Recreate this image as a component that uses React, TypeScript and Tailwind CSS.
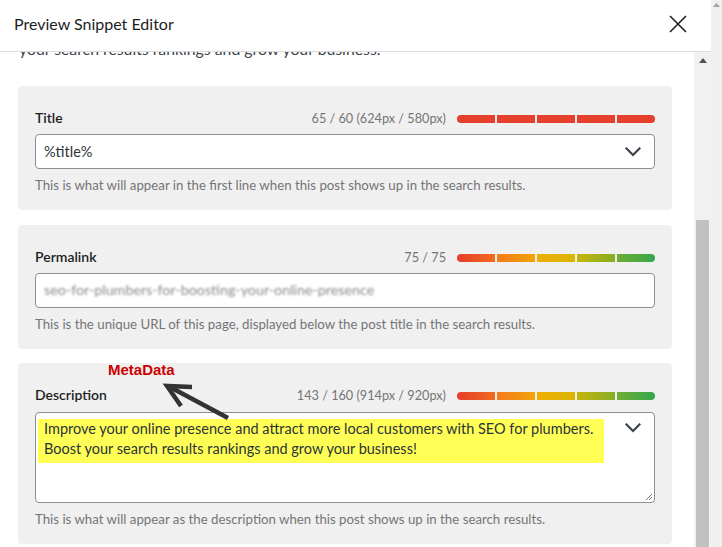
import React from "react";

const RED = ["bg-[#e5402b]", "bg-[#e5402b]", "bg-[#e5402b]", "bg-[#e5402b]", "bg-[#e5402b]"];
const GRAD = [
  "bg-[linear-gradient(90deg,#e53d2a,#f26a1e)]",
  "bg-[linear-gradient(90deg,#f4791a,#f2a30b)]",
  "bg-[linear-gradient(90deg,#eeae06,#dab500)]",
  "bg-[linear-gradient(90deg,#c6b50b,#86ad26)]",
  "bg-[linear-gradient(90deg,#6fae33,#35a64b)]",
];

function Bar({ segs }: { segs: string[] }) {
  return (
    <div className="mt-[2px] flex w-[198px] gap-[2px]">
      {segs.map((c, i) => (
        <div
          key={i}
          className={[
            "h-[8px] flex-1",
            c,
            i === 0 ? "rounded-l-[4px]" : "",
            i === segs.length - 1 ? "rounded-r-[4px]" : "",
          ].join(" ")}
        />
      ))}
    </div>
  );
}

function Chevron() {
  return (
    <svg width="16" height="10" viewBox="0 0 16 10" fill="none">
      <path d="M1.5 1.5 L8 8 L14.5 1.5" stroke="#3c434a" strokeWidth="2.2" strokeLinecap="square" />
    </svg>
  );
}

function Header({ label, counter, segs }: { label: string; counter: string; segs: string[] }) {
  return (
    <div className="flex h-[20px] items-center justify-between">
      <span className="mt-[-1px] text-[14px] font-semibold text-[#1e1e1e]">{label}</span>
      <div className="flex items-center gap-[11px]">
        <span className="mt-[2px] text-[12.7px] text-[#757575]">{counter}</span>
        <Bar segs={segs} />
      </div>
    </div>
  );
}

function Help({ children }: { children: React.ReactNode }) {
  return <div className="mt-[6px] text-[13.25px] leading-[20px] text-[#757575]">{children}</div>;
}

export default function App() {
  return (
    <div className="flex h-[547px] w-[722px] overflow-hidden bg-[#f0f0f0] font-['Lato','Segoe_UI',sans-serif]">
      <div className="flex w-[711px] flex-col bg-white">
        <div className="flex h-[52px] shrink-0 items-center justify-between border-b border-[#dcdcde] pl-[14px] pr-[24px]">
          <span className="mt-[-4px] text-[16px] text-[#1e1e1e]">Preview Snippet Editor</span>
          <svg width="18" height="18" viewBox="0 0 18 18" className="mt-[-4px]">
            <path d="M1 1 L17 17 M17 1 L1 17" stroke="#1e1e1e" strokeWidth="1.6" />
          </svg>
        </div>
        <div className="flex min-h-0 flex-1">
          <div className="relative flex-1 overflow-hidden pl-[18px] pr-[22px]">
            <div className="mt-[-13px] pl-[1px] text-[15.8px] leading-[20px] text-[#3c434a]">
              your search results rankings and grow your business.
            </div>
            <div className="mt-[27px] flex flex-col gap-[14.5px]">
              <div className="rounded-[4px] bg-[#f0f0f1] px-[17px] pt-[22px] pb-[15px]">
                <Header label="Title" counter="65 / 60 (624px / 580px)" segs={RED} />
                <div className="mt-[6px] flex h-[35px] items-center justify-between rounded-[4px] border border-[#8c8f94] bg-white pl-[8px] pr-[13px]">
                  <span className="text-[14.5px] text-[#2c3338]">%title%</span>
                  <Chevron />
                </div>
                <Help>This is what will appear in the first line when this post shows up in the search results.</Help>
              </div>

              <div className="rounded-[4px] bg-[#f0f0f1] px-[17px] pt-[22px] pb-[15px]">
                <Header label="Permalink" counter="75 / 75" segs={GRAD} />
                <div className="mt-[6px] flex h-[35px] items-center rounded-[4px] border border-[#8c8f94] bg-white pl-[8px] pr-[13px]">
                  <span className="text-[14.3px] text-[#8a8a8a] blur-[1px]">seo-for-plumbers-for-boosting-your-online-presence</span>
                </div>
                <Help>This is the unique URL of this page, displayed below the post title in the search results.</Help>
              </div>

              <div className="rounded-[4px] bg-[#f0f0f1] px-[17px] pt-[22px] pb-[15px]">
                <Header label="Description" counter="143 / 160 (914px / 920px)" segs={GRAD} />
                <div className="relative mt-[7px] flex h-[91px] items-start rounded-[4px] border border-[#8c8f94] bg-white">
                  <div className="ml-[2px] mt-[6px] w-[566px] bg-[#ffff55] pb-[4px] pl-[6px] text-[14.5px] leading-[20px] text-[#2c3338]">
                    Improve your online presence and attract more local customers with SEO for plumbers.
                    <br />
                    Boost your search results rankings and grow your business!
                  </div>
                  <div className="ml-auto mr-[13px] mt-[10px]">
                    <Chevron />
                  </div>
                  <svg width="8" height="8" viewBox="0 0 8 8" className="absolute bottom-[1px] right-[1px]">
                    <path d="M7 1 L1 7 M7 4 L4 7" stroke="#777" strokeWidth="1" />
                  </svg>
                </div>
                <Help>This is what will appear as the description when this post shows up in the search results.</Help>
              </div>
            </div>

            <span className="absolute left-[108px] top-[309px] font-['Liberation_Sans',Arial,sans-serif] text-[15px] font-bold leading-[18px] text-[#cc0000]">
              MetaData
            </span>
            <svg className="absolute left-[150px] top-[320px]" width="100" height="60" viewBox="0 0 100 60">
              <path d="M78 46 L18 14" stroke="#333" strokeWidth="4.5" strokeLinecap="butt" />
              <path d="M42 15 L17 14 L31 34" stroke="#333" strokeWidth="4.5" fill="none" strokeLinejoin="miter" />
            </svg>
          </div>
          <div className="relative flex w-[17px] shrink-0 flex-col items-center bg-[#f1f1f1]">
            <svg width="8" height="5" viewBox="0 0 8 5" className="mt-[6px]">
              <path d="M0 5 L4 0 L8 5 Z" fill="#505050" />
            </svg>
            <div className="mt-[157px] w-[13px] flex-1 bg-[#c1c1c1]" />
          </div>
        </div>
      </div>
      <div className="flex w-[11px] flex-col items-center">
        <svg width="7" height="4" viewBox="0 0 7 4" className="mt-[3px]">
          <path d="M0 4 L3.5 0 L7 4 Z" fill="#a3a3a3" />
        </svg>
      </div>
    </div>
  );
}
